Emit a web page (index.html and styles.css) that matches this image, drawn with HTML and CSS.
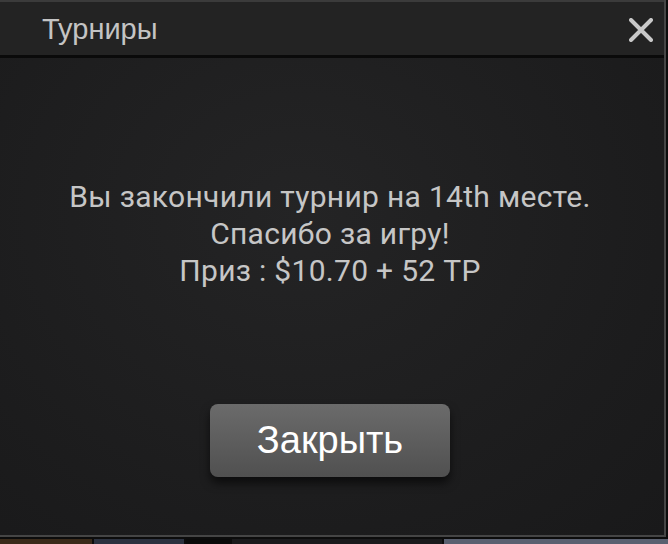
FILE: index.html
```html
<!DOCTYPE html>
<html lang="ru">
<head>
  <meta charset="UTF-8">
  <meta name="viewport" content="width=device-width, initial-scale=1.0">
  <title>Турниры</title>
  <link rel="stylesheet" href="styles.css">
</head>
<body>
  <div class="window">
    <header class="title-bar">
      <h1>Турниры</h1>
      <button class="close" aria-label="Закрыть">
        <svg width="24" height="24" viewBox="0 0 24 24">
          <path d="M2 2 L22 22 M22 2 L2 22" stroke="#c9c9c9" stroke-width="4" stroke-linecap="round"/>
        </svg>
      </button>
    </header>
    <main class="content">
      <p class="message">
        Вы закончили турнир на 14th месте.<br>
        Спасибо за игру!<br>
        Приз : $10.70 + 52 TP
      </p>
      <button class="btn-close">Закрыть</button>
    </main>
  </div>
  <div class="strip">
    <span class="thumb t1"></span>
    <span class="thumb t2"></span>
    <span class="thumb t3"></span>
    <span class="thumb t4"></span>
    <span class="thumb t5"></span>
  </div>
</body>
</html>
```

FILE: styles.css
```css
html, body {
  margin: 0;
  padding: 0;
  background-color: #0c0c0c;
  width: 668px;
  height: 544px;
  overflow: hidden;
}
.window {
  width: 664px;
  height: 535px;
  border-right: 2px solid #454545;
  border-bottom: 2px solid #454545;
  background-color: #1d1d1e;
  background-image: radial-gradient(ellipse at 45% 40%, #242425 0%, #1c1c1d 70%, #19191a 100%);
  display: flex;
  flex-direction: column;
}
.title-bar {
  height: 53px;
  border-top: 2px solid #3b3b3b;
  border-bottom: 3px solid #0a0a0a;
  background-color: #232323;
  display: flex;
  align-items: center;
  justify-content: space-between;
  padding: 0 8px 0 42px;
}
.title-bar h1 {
  margin: 0;
  font-family: "Liberation Sans", Arial, sans-serif;
  font-weight: normal;
  font-size: 29px;
  color: #c4c4c4;
  position: relative;
  top: 1px;
}
.close {
  background: none;
  border: none;
  padding: 0;
  width: 30px;
  height: 30px;
  display: flex;
  align-items: center;
  justify-content: center;
  margin-top: 2px;
}
.content {
  flex: 1;
  display: flex;
  flex-direction: column;
  align-items: center;
  padding-top: 120px;
  padding-right: 4px;
}
.message {
  margin: 0;
  font-family: Roboto, sans-serif;
  font-size: 30px;
  line-height: 37px;
  letter-spacing: 0.3px;
  color: #c6c6c6;
  text-align: center;
}
.btn-close {
  margin-top: 115px;
  width: 240px;
  height: 73px;
  border: none;
  border-radius: 8px;
  background: linear-gradient(#6b6b6b, #505050);
  box-shadow: 0 6px 10px rgba(0, 0, 0, 0.6);
  color: #ffffff;
  font-family: "Liberation Sans", Arial, sans-serif;
  font-size: 38px;
  cursor: pointer;
}
.strip {
  display: flex;
  gap: 2px;
  height: 7px;
  padding-top: 2px;
}
.thumb {
  display: block;
  height: 5px;
}
.t1 { width: 92px; background: #3a2a1a; }
.t2 { width: 90px; background: #2c3240; }
.t3 { width: 44px; background: #0a0a0a; }
.t4 { width: 210px; background: #1a1a1c; }
.t5 { flex: 1; background: #5a6070; }
```
